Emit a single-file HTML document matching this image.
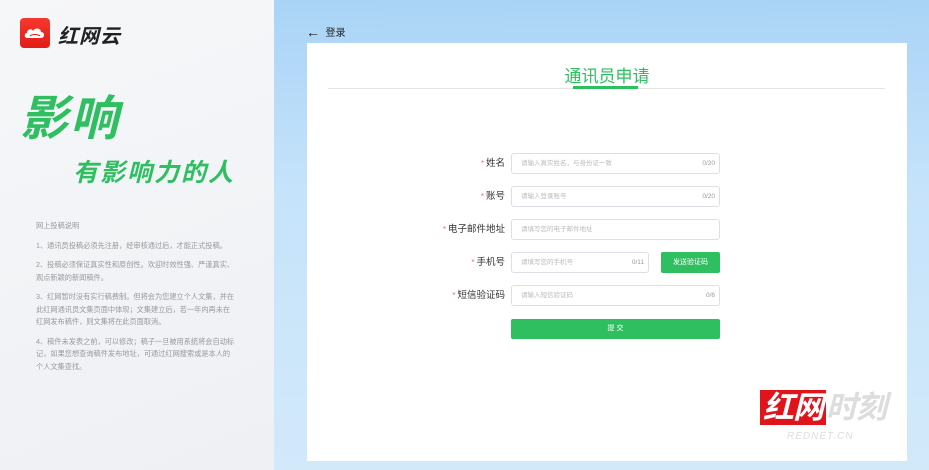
<!DOCTYPE html>
<html><head><meta charset="utf-8"><style>
*{margin:0;padding:0;box-sizing:border-box}
body{width:929px;height:470px;overflow:hidden;position:relative;font-family:"Liberation Sans","Noto Sans CJK SC",sans-serif;background:linear-gradient(180deg,#a9d3f6 0%,#c5e3fa 40%,#d2e9fa 100%)}
.left{position:absolute;left:0;top:0;width:274px;height:470px;background:linear-gradient(160deg,#f6f7f9,#eef0f4);}
.logo{position:absolute;left:20px;top:18px;width:30px;height:30px;border-radius:4px;background:linear-gradient(180deg,#f5392f,#e21c16)}
.brand{position:absolute;left:58px;top:20px;font-size:20px;font-weight:bold;color:#222;font-style:italic;letter-spacing:1px}
.big{position:absolute;left:20px;top:92px;font-size:48px;font-weight:bold;color:#2fbf60;font-style:italic;letter-spacing:2px;line-height:56px}
.sub{position:absolute;left:73px;top:153px;font-size:25px;font-weight:bold;color:#2fbf60;font-style:italic;letter-spacing:2px}
.notes{position:absolute;left:36px;top:220px;width:200px;font-size:7.2px;color:#999;line-height:12.5px}
.notes p{margin-bottom:7px}
.back{position:absolute;left:306px;top:24px;font-size:10px;color:#222}
.back i{font-style:normal;font-size:14px;vertical-align:-1px}
.card{position:absolute;left:307px;top:43px;width:600px;height:418px;background:#fff}
.title{position:absolute;left:0;width:600px;top:19px;text-align:center;font-size:17px;color:#2fbf60}
.line{position:absolute;left:21px;top:45px;width:557px;height:1px;background:#e4e4e4}
.ul{position:absolute;left:266px;top:43px;width:65px;height:3px;background:#2fbf60}
.row{position:absolute;left:0;height:21px}
.lab{position:absolute;right:402px;width:120px;text-align:right;font-size:9.5px;color:#333;line-height:21px;white-space:nowrap}
.lab b{color:#f56c6c;font-weight:normal;font-size:8px;margin-right:2px}
.inp{position:absolute;left:204px;width:209px;height:21px;border:1px solid #dcdfe6;border-radius:3px;font-size:6.5px;color:#bbb;line-height:19px;padding-left:9px}
.inp span{position:absolute;right:4px;color:#999}
.btn{position:absolute;background:#2fbf60;color:#fff;border-radius:2px;font-size:7px;text-align:center}
</style></head><body>
<div class="left">
<div class="logo"><svg width="30" height="30" viewBox="0 0 30 30"><path d="M7 20c-3 0-3-5 0-5 0-4 5-5 6-2 2-4 8-3 8 1 4 0 4 6 0 6z" fill="#fff"/><path d="M10 18c2-2 8-2 10 0" stroke="#e21c16" fill="none" stroke-width="1"/></svg></div>
<div class="brand">红网云</div>
<div class="big">影响</div>
<div class="sub">有影响力的人</div>
<div class="notes">
<p>网上投稿说明</p>
<p>1、通讯员投稿必须先注册，经审核通过后，才能正式投稿。</p>
<p>2、投稿必须保证真实性和原创性。欢迎时效性强、严谨真实、观点新颖的新闻稿件。</p>
<p>3、红网暂时没有实行稿费制。但将会为您建立个人文集，并在此红网通讯员文集页面中体现；文集建立后，若一年内再未在红网发布稿件，则文集将在此页面取消。</p>
<p>4、稿件未发表之前，可以修改；稿子一旦被用系统将会自动标记，如果您想查询稿件发布地址，可通过红网搜索或是本人的个人文集查找。</p>
</div>
</div>
<div class="back"><i>&#8592;</i>&nbsp; 登录</div>
<div class="card">
<div class="title">通讯员申请</div>
<div class="line"></div><div class="ul"></div>
<div class="row" style="top:110px;width:600px"><div class="lab"><b>*</b>姓名</div><div class="inp">请输入真实姓名，与身份证一致<span>0/20</span></div></div>
<div class="row" style="top:143px;width:600px"><div class="lab"><b>*</b>账号</div><div class="inp">请输入登录账号<span>0/20</span></div></div>
<div class="row" style="top:176px;width:600px"><div class="lab"><b>*</b>电子邮件地址</div><div class="inp">请填写您的电子邮件地址</div></div>
<div class="row" style="top:209px;width:600px"><div class="lab"><b>*</b>手机号</div><div class="inp" style="width:138px">请填写您的手机号<span>0/11</span></div><div class="btn" style="left:354px;top:0;width:59px;height:21px;line-height:21px">发送验证码</div></div>
<div class="row" style="top:242px;width:600px"><div class="lab"><b>*</b>短信验证码</div><div class="inp">请输入短信验证码<span>0/6</span></div></div>
<div class="btn" style="left:204px;top:276px;width:209px;height:20px;line-height:20px">提 交</div>
<div style="position:absolute;left:453px;top:346px;font-size:31px;font-weight:bold;font-style:italic;color:#fff;letter-spacing:-1px;line-height:38px"><span style="background:#e0141b;padding:0 3px">红网</span><span style="color:#ddd">时刻</span></div>
<div style="position:absolute;left:480px;top:388px;font-size:10px;font-style:italic;color:#ddd;letter-spacing:1px">REDNET.CN</div>
</div>
</body></html>
